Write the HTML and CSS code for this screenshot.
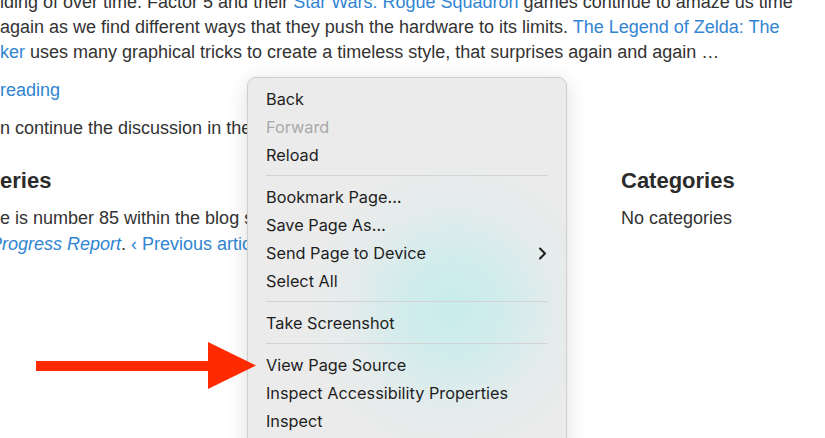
FILE: index.html
```html
<!DOCTYPE html>
<html lang="en">
<head>
<meta charset="utf-8">
<title>Context menu</title>
<link rel="stylesheet" href="styles.css">
</head>
<body>
<div class="page">
  <div class="article">
    <p class="lead">
      <span class="ln">iding of over time. Factor 5 and their <a href="#">Star Wars: Rogue Squadron</a> games continue to amaze us time</span>
      <span class="ln">again as we find different ways that they push the hardware to its limits. <a href="#">The Legend of Zelda: The</a></span>
      <span class="ln"><a href="#">ker</a> uses many graphical tricks to create a timeless style, that surprises again and again …</span>
    </p>
    <p class="ln"><a href="#">reading</a></p>
    <p class="ln">n continue the discussion in the forum thread of this article.</p>
    <div class="cols">
      <section class="series">
        <h2>eries</h2>
        <p class="ln">e is number 85 within the blog series Dolphin Progress Report.</p>
        <p class="ln shift"><a href="#"><em>Progress Report</em></a>. <a href="#">‹ Previous article</a> · <a href="#">Next article ›</a></p>
      </section>
      <aside class="cats">
        <h2>Categories</h2>
        <p class="ln">No categories</p>
      </aside>
    </div>
  </div>

  <div class="menu">
    <div class="item">Back</div>
    <div class="item disabled">Forward</div>
    <div class="item">Reload</div>
    <div class="sep"></div>
    <div class="item">Bookmark Page…</div>
    <div class="item">Save Page As…</div>
    <div class="item sub">Send Page to Device
      <svg class="chev" width="9" height="13" viewBox="0 0 9 13"><path d="M2 1.5 L7 6.5 L2 11.5" fill="none" stroke="#1d1d1d" stroke-width="2" stroke-linecap="round" stroke-linejoin="round"/></svg>
    </div>
    <div class="item">Select All</div>
    <div class="sep"></div>
    <div class="item">Take Screenshot</div>
    <div class="sep"></div>
    <div class="item">View Page Source</div>
    <div class="item">Inspect Accessibility Properties</div>
    <div class="item">Inspect</div>
  </div>

  <svg class="arrow" width="230" height="50" viewBox="0 0 230 50">
    <rect x="0" y="19" width="175" height="10" fill="#ff2a00"/>
    <polygon points="172,0 220,23.5 172,47" fill="#ff2a00"/>
  </svg>
</div>
</body>
</html>
```

FILE: styles.css
```css
html, body {
  margin: 0;
  padding: 0;
  background: #ffffff;
}

.page {
  position: relative;
  width: 825px;
  height: 438px;
  overflow: hidden;
  font-family: "Liberation Sans", Arial, sans-serif;
  font-size: 18px;
  color: #333333;
}

.article {
  margin-top: -10px;
}

.article a {
  color: #3185d2;
  text-decoration: none;
}

.ln {
  display: block;
  white-space: nowrap;
  line-height: 25px;
}

p {
  margin: 0 0 13px 0;
}

.cols {
  display: flex;
  margin-top: 26px;
}

.series {
  width: 621px;
  overflow: hidden;
}

.series p {
  margin: 0;
  line-height: 26px;
}

.series .shift {
  margin-left: -10px;
}

.cats p {
  margin: 0;
  line-height: 26px;
}

h2 {
  font-size: 22px;
  font-weight: bold;
  line-height: 28px;
  margin: 0 0 10px 0;
  color: #2b2b2b;
}

.menu {
  position: absolute;
  left: 247px;
  top: 77px;
  width: 318px;
  height: 400px;
  padding: 7px 0;
  border: 1px solid #cfcfcf;
  border-radius: 9px;
  background:
    radial-gradient(ellipse 150px 150px at 205px 230px, rgba(200, 236, 236, 1) 0%, rgba(206, 236, 236, 0.85) 35%, rgba(220, 236, 236, 0.4) 70%, rgba(236, 236, 236, 0) 100%),
    #ebebeb;
  box-shadow: 0 4px 22px rgba(0, 0, 0, 0.13), 0 0 2px rgba(0, 0, 0, 0.06);
  font-family: Inter, "Noto Sans", sans-serif;
  font-size: 16.3px;
  color: #1e1e1e;
}

.item {
  height: 28px;
  line-height: 28px;
  padding: 0 18px 0 18px;
  display: flex;
  align-items: center;
  justify-content: space-between;
  white-space: nowrap;
}

.item.disabled {
  color: #a9a9a9;
}

.sep {
  height: 1px;
  margin: 6px 18px 7px 18px;
  background: #d3d3d3;
}

.chev {
  display: block;
  margin-right: 1px;
}

.arrow {
  position: absolute;
  left: 36px;
  top: 342px;
}
```
